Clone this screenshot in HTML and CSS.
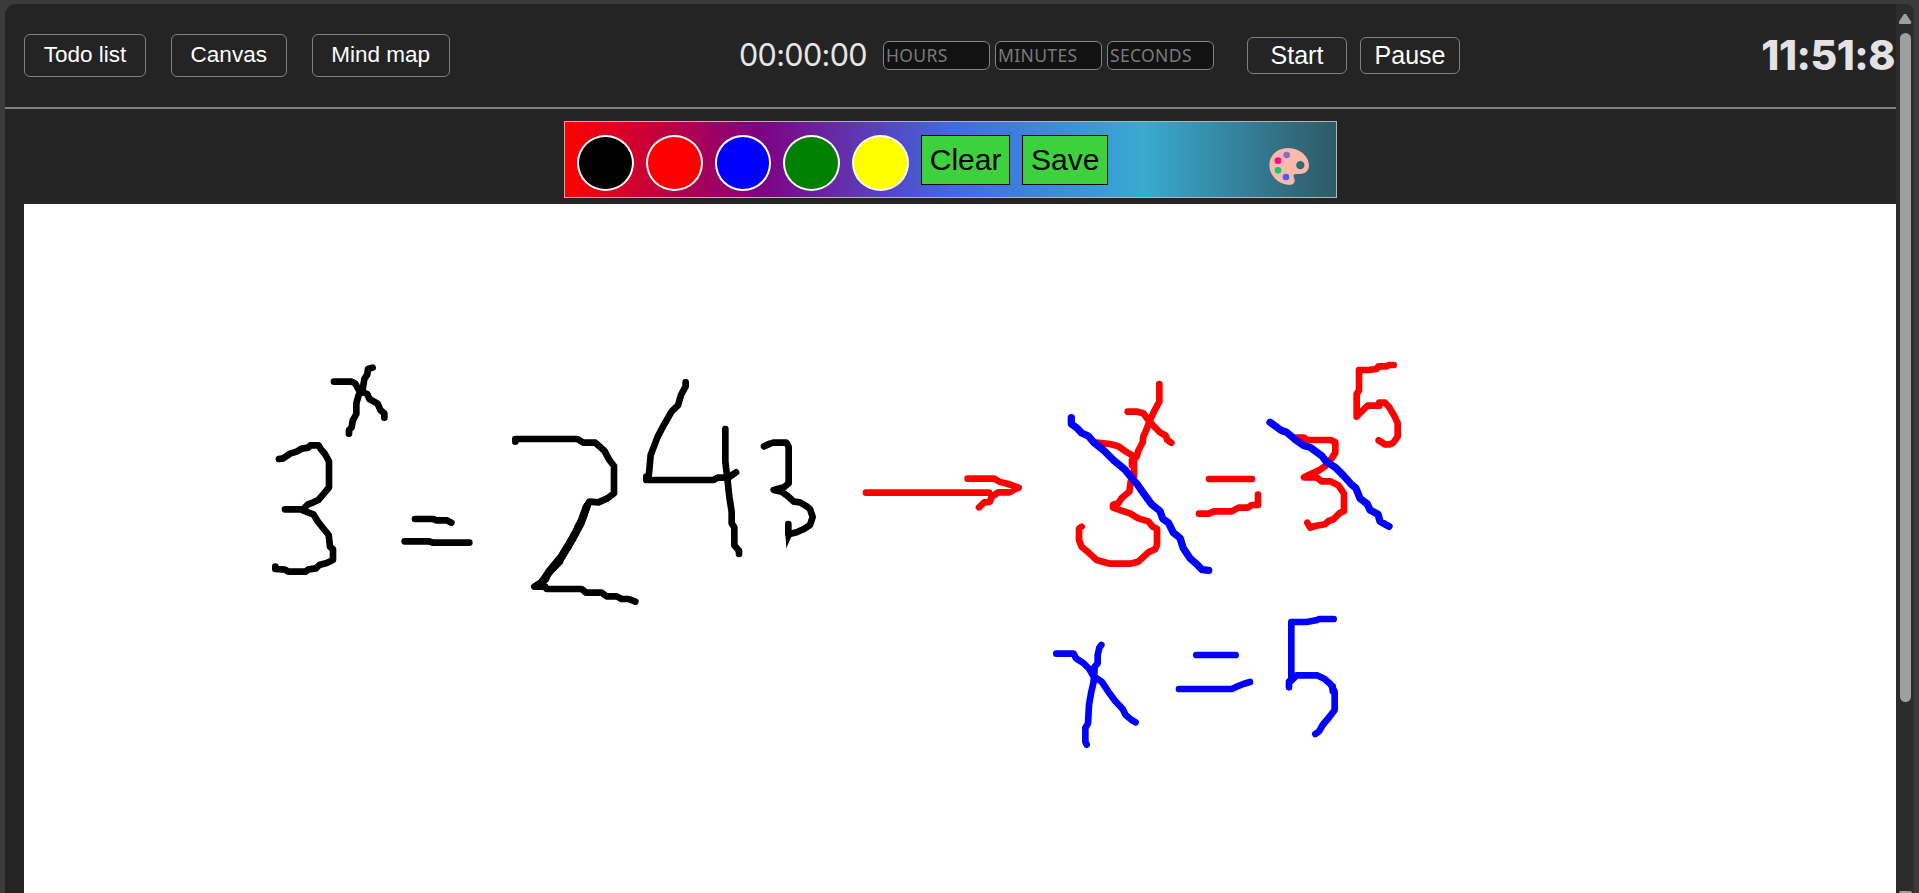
FILE: index.html
```html
<!DOCTYPE html>
<html lang="en">
<head>
<meta charset="utf-8">
<title>Canvas</title>
<link rel="stylesheet" href="styles.css">
</head>
<body>
<div class="window">
  <div class="page">
    <header class="header">
      <nav class="nav">
        <button class="btn">Todo list</button>
        <button class="btn">Canvas</button>
        <button class="btn">Mind map</button>
      </nav>
      <div class="timer">
        <span class="countdown">00:00:00</span>
        <div class="fields">
          <input class="field" placeholder="HOURS">
          <input class="field" placeholder="MINUTES">
          <input class="field" placeholder="SECONDS">
        </div>
        <div class="actions">
          <button class="btn action">Start</button>
          <button class="btn action">Pause</button>
        </div>
      </div>
      <div class="clock">11:51:8</div>
    </header>
    <div class="toolbar">
      <span class="swatch black"></span>
      <span class="swatch red"></span>
      <span class="swatch blue"></span>
      <span class="swatch green"></span>
      <span class="swatch yellow"></span>
      <button class="tool">Clear</button>
      <button class="tool">Save</button>
      <svg class="palette" viewBox="926 113 120 112">
        <path fill="#fdb8ac" fill-rule="evenodd" d="M984 113C950 113 927 136 927 164C927 198 958 224 987 224C998 224 1003 218 1003 210C1003 203 998 199 1000 194C1002 190 1008 191 1018 191C1036 191 1046 180 1046 164C1045 139 1019 113 984 113ZM1020 152a12.500 12.500 0 1 1 0 25a12.500 12.500 0 1 1 0-25Z"/>
        <circle cx="979" cy="134" r="10" fill="#8f6ac8"/>
        <circle cx="953" cy="151" r="10" fill="#fb0a8c"/>
        <circle cx="953" cy="180" r="10" fill="#00d166"/>
        <circle cx="977" cy="200" r="10" fill="#4062ff"/>
      </svg>
    </div>
    <svg class="board" viewBox="24 204 1872 689">
      <g class="ink" transform="translate(250 350) scale(.33333)">
        <path d="M252 95H305L316 101L328 123L352 132L358 147L383 161L391 180L403 190V203"/>
        <path d="M368 53L354 57L352 73L343 87L338 119L326 135L319 160V192L308 212L305 232L297 240V251"/>
        <path d="M87 327L100 325L120 311L140 305L155 296L175 293L181 286H206L213 298L225 312L237 334V412L224 428L205 450L190 457L174 463L160 478H105"/>
        <path d="M160 482L190 493L202 512L219 534L236 555L240 590L249 598V630L230 639L208 645L198 655L176 658L166 665H115L105 659L76 657V650"/>
        <path d="M495 507H550L558 511H590L604 518M464 574H538L548 578H658"/>
      </g>
      <g class="ink" transform="translate(490 360) scale(.33333)">
        <path d="M76 245V237H262L280 248H316L343 272L358 300L372 318V400L352 415L325 427L298 425L290 440L281 470L263 500L255 525L240 544L235 562L220 578L210 605L190 625L175 635L168 658L133 680H165"/>
        <path class="heavy" d="M290 440L272 490L245 540L215 590L178 635L155 668"/>
        <path d="M152 668L170 687H275L288 698H335L350 709H380L395 717H416L436 725"/>
        <path d="M587 67V79L573 105L564 136L545 154L520 198L503 230L494 254L482 285L478 330L475 357M469 350V360H670L683 353H715L738 337"/>
        <path d="M706 207V305L712 355L718 410L725 455V490L733 502V556L747 572V582"/>
        <path d="M822 259L840 251L850 248H889L896 260V370L882 382L851 390L875 395L892 407L912 425L930 427L950 439L960 447L968 471L960 495L940 508L920 517L895 523V492"/>
        <path class="fill" d="M886 520L889 565L906 525Z"/>
      </g>
      <g class="ink ink-red" transform="translate(850 360) scale(.33333)">
        <path d="M48 398H417M353 356H433L450 366L475 372L506 383L490 390L478 397H445L425 410L420 425L403 427L387 442"/>
        <path d="M740 248L780 252L805 259L825 273L848 287L852 300V350L842 365L838 395L815 414L805 430L789 434V443L815 452L840 460L865 475L895 484L908 500L921 506V555L915 568L895 577L865 605L840 611H780L740 600L715 577L695 560L687 540V506L695 500"/>
        <path d="M928 72V125L912 155L899 183L890 207L880 230L878 247L865 272L860 290L846 300V316M833 155H862L880 160L895 180L908 195L930 217L947 227L952 240L964 248"/>
      </g>
      <g class="ink ink-red" transform="translate(1180 350) scale(.33333)">
        <path d="M87 387H216M57 491H86L102 484H155L176 473H204L215 465H234V434"/>
        <path d="M345 263H372L381 270H452L466 277V308L455 325L437 347L415 362L397 370L372 382H410L425 394H450L475 406L492 431V483L478 490L460 508L446 513L435 523L405 528L391 533L382 518"/>
        <path d="M641 45H628L620 49H595L590 57L565 60H537V122L530 132V200L545 184L563 167H598V158H615L628 172L644 200L653 219V260L640 278L630 283H615L596 271"/>
      </g>
      <g class="ink ink-blue" transform="translate(850 360) scale(.33333)">
        <path class="slash" d="M664 173V192L680 203L695 219L715 228L732 248L760 270L792 302L825 329L842 350L862 373L880 399L905 433L930 453L938 476L955 488L970 518L990 534L1000 565L1020 595L1042 614L1056 629L1076 631"/>
      </g>
      <g class="ink ink-blue" transform="translate(1180 350) scale(.33333)">
        <path class="slash" d="M270 217L303 241L320 247L347 270L372 287L390 292L425 317L440 336L466 352L490 376L512 401L528 415L540 445L562 462L570 480L594 493L600 514L627 529"/>
      </g>
      <g class="ink ink-blue" transform="translate(1040 600) scale(.33333)">
        <path d="M49 161H101L108 175L130 189L148 207L160 228L185 245L205 275L225 302L248 327L257 345L275 360L287 367M184 135L178 143L173 165V190L164 200L163 220L160 250L153 280L147 315L144 370L136 384V425L140 434"/>
        <path d="M469 165H587M417 267H575L590 260L610 252L630 246"/>
        <path d="M881 57H838L828 61L800 66H754V238L747 245V262M754 242L770 226H831L853 236L872 253L884 275V330L868 351L848 375L837 394L826 402"/>
        <path d="M878 259V273"/>
      </g>
    </svg>
  </div>
  <div class="scrollbar">
    <span class="arrow"></span>
    <span class="thumb"></span>
    <span class="arrow-end"></span>
  </div>
</div>
</body>
</html>
```
FILE: styles.css
```css
* { box-sizing: border-box; }
body {
  margin: 0;
  height: 893px;
  overflow: hidden;
  background: #3b3b3b;
  padding: 4px 5px 0;
}
.window {
  display: flex;
  height: 889px;
  background: #242424;
  border-radius: 11px 9px 0 0;
  overflow: hidden;
}
.page { width: 1891px; flex: none; }
.header {
  display: grid;
  grid-template-columns: 716px 722px 1fr;
  align-items: center;
  height: 105px;
  padding-left: 19px;
  border-bottom: 2px solid #808080;
}
.nav { display: flex; gap: 25px; align-self: start; margin-top: 30px; }
.btn {
  height: 43px;
  padding: 0 18.7px 2px;
  border: 1px solid #808080;
  border-radius: 6px;
  background: transparent;
  color: #fff;
  font: 22.5px/39px "Liberation Sans", Arial, sans-serif;
  white-space: nowrap;
}
.timer { display: flex; align-items: center; height: 40px; margin-bottom: 1px; }
.countdown {
  width: 144px;
  flex: none;
  margin-left: -1px;
  color: #e6e6e6;
  font: 30.5px/40px Inter, sans-serif;
  letter-spacing: -.65px;
}
.fields { display: flex; gap: 5px; }
.field {
  width: 107px;
  height: 29px;
  padding: 0 2px;
  border: 1px solid #858585;
  border-radius: 6px;
  background: #121212;
  font: 17.5px "Noto Sans", sans-serif;
  letter-spacing: .35px;
}
.field::placeholder { color: #7a7a7a; opacity: 1; }
.actions { display: flex; gap: 13px; margin-left: 33px; }
.action { width: 100px; height: 37px; padding: 0; font-size: 25px; line-height: 35px; }
.clock {
  justify-self: end;
  margin-right: 1px;
  margin-bottom: 1px;
  color: #e3e3e3;
  font: 800 41px/50px Inter, sans-serif;
  letter-spacing: -.5px;
}
.toolbar {
  display: flex;
  align-items: flex-start;
  gap: 12px;
  width: 773px;
  height: 77px;
  margin: 12px 0 6px 559px;
  padding: 13px 27px 0 12px;
  border: 1px solid #b4b4b4;
  background: linear-gradient(90deg, red, purple, royalblue, #39aad0, #2f5967);
}
.swatch {
  width: 56.8px;
  height: 56px;
  flex: none;
  border: 2px solid #fff;
  border-radius: 50%;
}
.black { background: #000; }
.red { background: red; }
.blue { background: blue; }
.green { background: green; }
.yellow { background: #ff0; }
.tool {
  height: 50px;
  padding: 0 7.8px;
  border: 1px solid #000;
  background: #3dd13d;
  color: #000;
  font: 30px/46px "Liberation Sans", Arial, sans-serif;
}
.palette { width: 40px; height: 37.3px; margin: 13px 0 0 auto; }
.board { display: block; width: 1872px; height: 689px; margin-left: 19px; background: #fff; }
.ink { fill: none; stroke: #000; stroke-width: 20; stroke-linecap: round; stroke-linejoin: round; }
.ink-red { stroke: red; }
.ink-blue { stroke: blue; }
.ink .heavy { stroke-width: 24; }
.ink .slash { stroke-width: 22; }
.ink .fill { fill: #000; stroke: none; }
.scrollbar {
  display: flex;
  flex-direction: column;
  align-items: center;
  flex: 1;
  background: #2c2c2c;
}
.arrow {
  width: 13px;
  height: 10px;
  margin: 10px 0 9px;
  background: #9f9f9f;
  clip-path: polygon(42% 0, 58% 0, 100% 82%, 92% 100%, 8% 100%, 0 82%);
}
.thumb { width: 11px; height: 669px; border-radius: 6px; background: #9f9f9f; }
.arrow-end { width: 13px; height: 2px; margin-top: auto; background: #9f9f9f; border-radius: 2px 2px 0 0; }
```
